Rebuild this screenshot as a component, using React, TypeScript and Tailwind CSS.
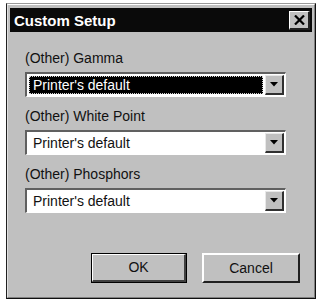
const font = { fontFamily: '"Liberation Sans", Arial, sans-serif' };

const Arrow = () => (
  <svg width="8" height="5" viewBox="0 0 8 5" aria-hidden="true">
    <path d="M0 0h8L4 4.5z" fill="#000" />
  </svg>
);

type ComboProps = {
  value: string;
  focused?: boolean;
};

const Combo = ({ value, focused }: ComboProps) => (
  <div className="flex h-[25px] w-[261px] border-t-2 border-l-2 border-t-[#606060] border-l-[#606060] border-r border-b border-r-white border-b-white bg-white">
    <div className="flex flex-1 p-[2px]">
      {focused ? (
        <div className="flex flex-1 items-center border border-dotted border-[#d0d0d0] bg-black pl-[3px] text-[14px] leading-none text-white">
          {value}
        </div>
      ) : (
        <div className="flex flex-1 items-center pl-[4px] text-[14px] leading-none text-[#111]">
          {value}
        </div>
      )}
    </div>
    <div className="my-[1px] mr-[1px] flex w-[19px] items-center justify-center border-t border-l border-t-[#e8e8e8] border-l-[#e8e8e8] border-r-2 border-b-2 border-r-[#303030] border-b-[#303030] bg-[#c0c0c0]">
      <Arrow />
    </div>
  </div>
);

const Field = ({ label, focused }: { label: string; focused?: boolean }) => (
  <div className="flex flex-col">
    <div className="h-[18px] text-[14px] leading-[18px] text-[#111]">{label}</div>
    <div className="mt-[5px]">
      <Combo value="Printer's default" focused={focused} />
    </div>
  </div>
);

export default function App() {
  return (
    <div className="h-[303px] w-[320px] bg-white pl-[6px] pt-[3px]" style={font}>
      <div className="h-[296px] w-[310px] border border-[#101010] border-t-[#9a9a9a] border-l-[#202020] bg-[#c0c0c0]">
        <div className="flex h-full flex-col border border-t-white border-l-[#e0e0e0] border-r-[#808080] border-b-[#808080] px-[2px] pt-[3px]">
          {/* title bar */}
          <div className="flex h-[24px] items-center justify-between bg-[#0a0a0a] pl-[4px] pr-[2px]">
            <span className="text-[15px] font-bold leading-none text-white">Custom Setup</span>
            <div className="flex h-[19px] w-[21px] items-center justify-center border-t border-l border-t-white border-l-white border-r-2 border-b-2 border-r-[#202020] border-b-[#202020] bg-[#c0c0c0]">
              <svg width="11" height="10" viewBox="0 0 11 10" aria-hidden="true">
                <path d="M1 0.5l9 9M10 0.5l-9 9" stroke="#000" strokeWidth="2.2" />
              </svg>
            </div>
          </div>

          <div className="flex flex-1 flex-col pl-[15px] pt-[17px]">
            <Field label="(Other) Gamma" focused />
            <div className="mt-[10px]">
              <Field label="(Other) White Point" />
            </div>
            <div className="mt-[10px]">
              <Field label="(Other) Phosphors" />
            </div>

            <div className="mt-[40px] flex justify-end gap-[15px] pr-[12px]">
              <div className="border border-black">
                <div className="flex h-[28px] w-[94px] items-center justify-center border-t border-l border-t-white border-l-white border-r-2 border-b-2 border-r-[#404040] border-b-[#404040] bg-[#c0c0c0] text-[14px] text-[#111]">
                  OK
                </div>
              </div>
              <div className="flex h-[30px] w-[98px] items-center justify-center border-t-2 border-l-2 border-t-white border-l-white border-r-2 border-b-2 border-r-[#202020] border-b-[#202020] bg-[#c0c0c0] text-[14px] text-[#111]">
                Cancel
              </div>
            </div>
          </div>
        </div>
      </div>
    </div>
  );
}
